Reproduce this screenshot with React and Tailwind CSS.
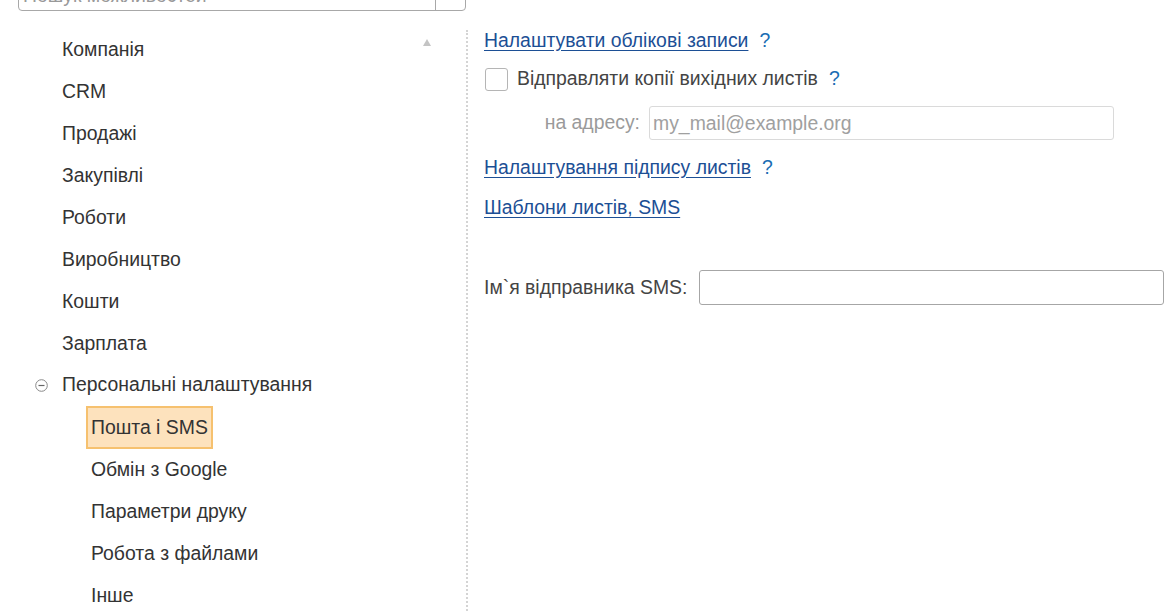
import React from 'react';

const topItems = ['Компанія', 'CRM', 'Продажі', 'Закупівлі', 'Роботи', 'Виробництво', 'Кошти', 'Зарплата'];
const subItems = ['Обмін з Google', 'Параметри друку', 'Робота з файлами', 'Інше'];

const Help = () => <span className="ml-[11px] text-[#1a6db3]">?</span>;

const App = () => {
    return (
        <div className="w-[1176px] h-[611px] overflow-hidden bg-white text-[19.4px] text-[#333] font-['Liberation_Sans',Arial,sans-serif] flex">
            {/* Left: search + tree */}
            <div className="w-[466px] shrink-0 flex flex-col">
                <div className="ml-[18px] mt-[-22px] h-[35px] flex border border-[#a8a8a8] rounded-[4px]">
                    <div className="flex-1 px-[4px] pt-[1px] text-[#999] leading-[30px]">Пошук можливостей</div>
                    <div className="w-[30px] border-l border-[#a8a8a8]"></div>
                </div>
                <div className="relative flex-1 pt-[17px]">
                    <div className="absolute left-[423px] top-[28px] w-0 h-0 border-l-[4px] border-r-[4px] border-b-[7px] border-l-transparent border-r-transparent border-b-[#c4c4c4]"></div>
                    {topItems.map((t) => (
                        <div key={t} className="h-[42px] leading-[42px] pl-[62px]">{t}</div>
                    ))}
                    <div className="h-[42px] flex items-center">
                        <svg className="ml-[35px] mr-[14px]" width="13" height="13" viewBox="0 0 13 13">
                            <circle cx="6.5" cy="6.5" r="5.8" fill="none" stroke="#888" strokeWidth="1" />
                            <line x1="3.5" y1="6.5" x2="9.5" y2="6.5" stroke="#666" strokeWidth="1.2" />
                        </svg>
                        <span>Персональні налаштування</span>
                    </div>
                    <div className="h-[42px] flex items-center pl-[86px]">
                        <span className="h-[43px] leading-[39px] px-[3px] bg-[#fde2bd] border-2 border-[#f6c16f]">Пошта і SMS</span>
                    </div>
                    {subItems.map((t) => (
                        <div key={t} className="h-[42px] leading-[42px] pl-[91px]">{t}</div>
                    ))}
                </div>
            </div>
            {/* Divider */}
            <div className="mt-[30px] w-0 border-l-2 border-dotted border-[#d4d4d4]"></div>
            {/* Right: settings */}
            <div className="flex-1 pl-[16px] pt-[28px] flex flex-col">
                <div className="h-[24px] leading-[24px]">
                    <a className="text-[#1c4f95] underline underline-offset-[3px]">Налаштувати облікові записи</a>
                    <Help />
                </div>
                <div className="mt-[15px] h-[24px] flex items-center">
                    <div className="w-[23px] h-[23px] ml-[1px] border border-[#b5b5b5] rounded-[3px] bg-white"></div>
                    <span className="ml-[9px] text-[#444]">Відправляти копії вихідних листів</span>
                    <Help />
                </div>
                <div className="mt-[15px] flex items-center">
                    <span className="w-[156px] text-right text-[#9a9a9a]">на адресу:</span>
                    <div className="ml-[9px] w-[465px] h-[34px] border border-[#dadada] rounded-[3px] px-[3px] leading-[32px] text-[#a0a0a0]">my_mail@example.org</div>
                </div>
                <div className="mt-[15px] h-[24px] leading-[24px]">
                    <a className="text-[#1c4f95] underline underline-offset-[3px]">Налаштування підпису листів</a>
                    <Help />
                </div>
                <div className="mt-[16px] h-[24px] leading-[24px]">
                    <a className="text-[#1c4f95] underline underline-offset-[3px]">Шаблони листів, SMS</a>
                </div>
                <div className="mt-[51px] flex items-center">
                    <span className="text-[#444]">Ім`я відправника SMS:</span>
                    <div className="ml-[12px] w-[465px] h-[35px] border border-[#a6a6a6] rounded-[3px]"></div>
                </div>
            </div>
        </div>
    );
};

export default App;
